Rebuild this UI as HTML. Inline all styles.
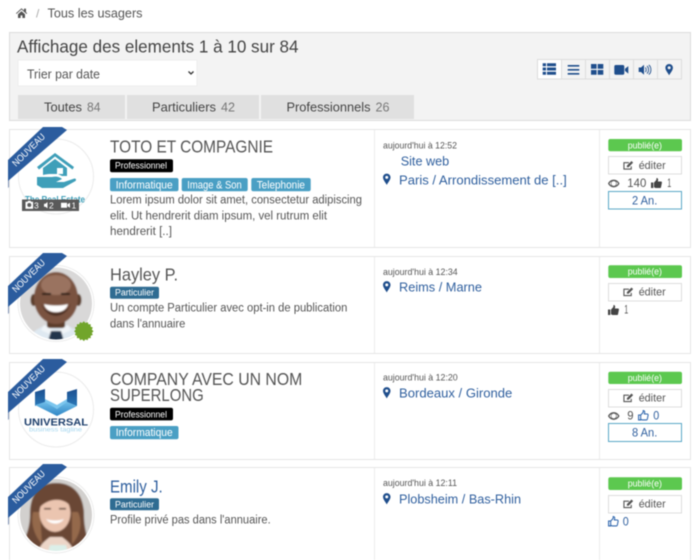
<!DOCTYPE html>
<html lang="fr">
<head>
<meta charset="utf-8">
<title>Tous les usagers</title>
<style>
html,body{margin:0;padding:0;background:#fff;width:700px;height:560px;overflow:hidden}
svg{display:block;filter:blur(.45px)}
text{font-family:"Liberation Sans",sans-serif;fill:#555;white-space:pre}
.l{fill:#2f5f9e}
.w{fill:#fff}
.d{font-size:9.5px;fill:#555}
.t{font-size:17.5px}
.p{font-size:11.5px}
.a{font-size:13px;fill:#2f5f9e}
.e{font-size:11px}
.s{font-size:9px;fill:#fff}
.n{font-size:12px}
.tag{font-size:11px;fill:#fff}
.lab{font-size:9px;fill:#fff}
.tab{font-size:13px;fill:#444}
.cnt{font-size:13px;fill:#777}
</style>
</head>
<body>
<svg width="700" height="560" viewBox="0 0 700 560" xmlns="http://www.w3.org/2000/svg">
<defs>
<symbol id="pin" viewBox="0 0 8 12" overflow="visible"><path fill="#1f4e8c" fill-rule="evenodd" d="M4 0C1.800 0 0 1.800 0 4c0 2.600 2.600 5.400 4 8 1.400-2.600 4-5.400 4-8 0-2.200-1.800-4-4-4zm0 2.400A1.600 1.600 0 1 1 4 5.600 1.600 1.600 0 0 1 4 2.400z"/></symbol>
<symbol id="edit" viewBox="0 0 12 11" overflow="visible"><path fill="none" stroke="#555" stroke-width="1.200" d="M9 6.500V9.400H1V2.400H6.500"/><path fill="#555" d="M4.200 5.600 9.300.6l1.800 1.800-5 5H4.200z"/></symbol>
<symbol id="eye" viewBox="0 0 12 8" overflow="visible"><path fill="#555" fill-rule="evenodd" d="M6 0C3.400 0 1.200 1.600 0 4c1.200 2.400 3.400 4 6 4s4.800-1.600 6-4C10.800 1.600 8.600 0 6 0zm0 1.500a2.500 2.500 0 1 1 0 5 2.500 2.500 0 0 1 0-5zM1.500 4c.6-.9 1.300-1.600 2.200-2.100A3.500 3.500 0 0 0 3.700 6.100C2.800 5.600 2.100 4.900 1.500 4zm9 0c-.6.9-1.300 1.600-2.200 2.100a3.500 3.500 0 0 0 0-4.200c.9.500 1.600 1.200 2.200 2.100z"/></symbol>
<symbol id="thumb" viewBox="0 0 11 10" overflow="visible"><path fill="#444" d="M0 4.500h2.300V10H0zM3 4.600 5.300 2 5.500 0c1.300 0 1.800 1 1.600 2.200L6.800 3.500H10c.7 0 1 .6.900 1.200L10 9.200c-.1.500-.5.800-1 .8H4.500L3 9.200z"/></symbol>
<symbol id="thumbo" viewBox="0 0 11 11" overflow="visible"><path fill="none" stroke="#2f66ad" stroke-width="1.100" d="M.6 5.200h2.200v5.200H.6zM2.800 5.400 5.300 2.600 5.500.6c1.200 0 1.700 1 1.500 2.100L6.700 4.200h2.900c.7 0 1.100.6 1 1.200L9.800 9.500c-.1.500-.5.900-1 .9H4.500L2.800 9.700z"/></symbol>
<symbol id="rib" viewBox="0 0 60 64" overflow="visible">
<path fill="#7f93b3" d="M0 50V61L1 60V50z"/>
<path fill="#2b5c9e" d="M0 33 35 0H54L59 3 0 54z"/>
<text x="0" y="0" transform="translate(8 40) rotate(-45)" style="font-size:9.500px;fill:#fff" textLength="42" lengthAdjust="spacingAndGlyphs">NOUVEAU</text>
</symbol>
<clipPath id="c2"><circle cx="56" cy="303.500" r="36"/></clipPath>
<clipPath id="c4"><circle cx="56" cy="515" r="36"/></clipPath>
<linearGradient id="bl1" x1="0" y1="0" x2="0" y2="1"><stop offset="0" stop-color="#1d4f8f"/><stop offset="1" stop-color="#2a78b8"/></linearGradient>
<linearGradient id="bl2" x1="0" y1="0" x2="0" y2="1"><stop offset="0" stop-color="#6fbde8"/><stop offset="1" stop-color="#2f86c5"/></linearGradient>
<filter id="soft" x="-10%" y="-10%" width="120%" height="120%"><feGaussianBlur stdDeviation=".9"/></filter>
</defs>

<!-- breadcrumb -->
<path fill="#555" d="M16 13.200 21.500 8.200 24 10.500V8.600h2v3.700l1.200 1-.7.700-5-4.500-5 4.500zM18 14.200l3.500-3.100 3.500 3.100V18h-2.600v-2.600h-1.800V18H18z"/>
<text x="36" y="17.500" style="font-size:12px;fill:#aaa">/</text>
<text x="47.500" y="17.500" style="font-size:12.500px;fill:#555" textLength="95" lengthAdjust="spacingAndGlyphs">Tous les usagers</text>

<!-- panel -->
<rect x="9.500" y="32.500" width="681" height="88" fill="#f3f3f3" stroke="#dcdcdc"/>
<text x="17" y="52.700" style="font-size:17.500px;fill:#444" textLength="281.500" lengthAdjust="spacingAndGlyphs">Affichage des elements 1 à 10 sur 84</text>
<rect x="18" y="60" width="179" height="26" fill="#fff" stroke="#eee"/>
<text x="27" y="78.700" style="font-size:12.500px;fill:#555" textLength="73" lengthAdjust="spacingAndGlyphs">Trier par date</text>
<path d="M188.500 71.500 191 74l2.500-2.500" fill="none" stroke="#333" stroke-width="1.300"/>
<rect x="18" y="95" width="107" height="24" fill="#e0e0e0"/>
<rect x="127" y="95" width="132" height="24" fill="#e0e0e0"/>
<rect x="261" y="95" width="153" height="24" fill="#e0e0e0"/>
<text class="tab" x="44" y="111.700" textLength="38" lengthAdjust="spacingAndGlyphs">Toutes</text>
<text class="cnt" x="87" y="111.700" textLength="13.500" lengthAdjust="spacingAndGlyphs">84</text>
<text class="tab" x="152" y="111.700" textLength="64" lengthAdjust="spacingAndGlyphs">Particuliers</text>
<text class="cnt" x="221" y="111.700" textLength="14" lengthAdjust="spacingAndGlyphs">42</text>
<text class="tab" x="286.500" y="111.700" textLength="84" lengthAdjust="spacingAndGlyphs">Professionnels</text>
<text class="cnt" x="375.500" y="111.700" textLength="14" lengthAdjust="spacingAndGlyphs">26</text>

<!-- view buttons -->
<rect x="537.500" y="59.500" width="144" height="19.500" fill="#f3f3f3" stroke="#ddd"/>
<rect x="537.500" y="59.500" width="24" height="19.500" fill="#fff" stroke="#ddd"/>
<path stroke="#ddd" d="M585.500 60v19M609.500 60v19M633.500 60v19M657.500 60v19"/>
<g fill="#1f4e8c">
<path d="M542.700 63.300h3.300v3h-3.300zM547 63.300h9v3h-9zM542.700 67.500h3.300v3h-3.300zM547 67.500h9v3h-9zM542.700 71.700h3.300v3h-3.300zM547 71.700h9v3h-9z"/>
<path d="M567.700 65h11.600v1.600h-11.600zM567.700 69h11.600v1.600h-11.600zM567.700 73h11.600v1.600h-11.600z"/>
<path d="M591 64h5.600v4.700H591zM597.700 64h5.600v4.700h-5.600zM591 70h5.600v4.700H591zM597.700 70h5.600v4.700h-5.600z"/>
<path d="M614.300 66.500c0-.9.600-1.500 1.500-1.500h7c.9 0 1.500.6 1.500 1.500v6.700c0 .9-.6 1.500-1.500 1.500h-7c-.9 0-1.500-.6-1.500-1.500zM625 68.800l3.300-2.700v7.500l-3.300-2.700z"/>
<path d="M638.700 67.500h2.300l3-2.700v9.900l-3-2.700h-2.300z"/>
<path d="M645.300 67.500c1.200.9 1.200 3.600 0 4.500M647 66c2 1.500 2 6 0 7.500M648.800 65c2.800 2 2.800 7.500 0 9.500" fill="none" stroke="#1f4e8c" stroke-width=".9"/>
</g>
<use href="#pin" x="665" y="64" width="8.300" height="11.300"/>

<!-- CARD 1 -->
<rect x="9.500" y="129.500" width="681" height="118" fill="#fff" stroke="#e6e6e6"/>
<path stroke="#ececec" d="M374.500 130v117M599.500 130v117"/>
<circle cx="56" cy="176.500" r="37.500" fill="#fff" stroke="#ebebeb"/>
<g fill="#3f9fb9">
<path d="M37 167 55 153 74 167 72.500 169.500 55 156.500 39 169.500z"/>
<path d="M43 168 55 159 67 168V176H62L58 174H50C47 174 45 174.500 43 175z"/>
<path d="M37 177H52C56 176 60 177 62 179L56 182H64L74.500 178.500C76 178.500 76.500 180 75.500 181L63 188H42L37 185z"/>
</g>
<path d="M57 168h6v6h-6z" fill="#fff"/>
<text x="25" y="202.500" style="font-size:9px;font-weight:bold;fill:#3f9fb9" textLength="60" lengthAdjust="spacingAndGlyphs">The Real Estate</text>
<rect x="22" y="199.500" width="57" height="11.500" fill="#5a5a5a"/>
<path fill="#fff" fill-rule="evenodd" d="M25.500 201.700h2l.6-1h2.400l.6 1h2v7h-7.600zm3.800 1.300a2 2 0 1 0 0 4 2 2 0 0 0 0-4z"/>
<text x="34" y="208.700" style="font-size:8.500px;fill:#fff">3</text>
<path fill="#fff" d="M44 203.700h1.500l2-1.700v6.400l-2-1.700H44z"/>
<text x="49" y="208.700" style="font-size:8.500px;fill:#fff">2</text>
<path fill="#fff" d="M61 202.700h6v5h-6zM67.500 204.200l2.500-1.500v5l-2.500-1.500z"/>
<text x="71.500" y="208.700" style="font-size:8.500px;fill:#fff">1</text>
<use href="#rib" x="8" y="127" width="60" height="64"/>

<text class="t" x="110" y="152.700" textLength="163" lengthAdjust="spacingAndGlyphs">TOTO ET COMPAGNIE</text>
<rect x="110" y="159.300" width="63" height="13" rx="2" fill="#000"/>
<text class="lab" x="115" y="168.700" textLength="52" lengthAdjust="spacingAndGlyphs">Professionnel</text>
<rect x="110" y="178" width="68.500" height="13.300" rx="2" fill="#4a9fc4"/>
<text class="tag" x="115.700" y="188.300" textLength="57" lengthAdjust="spacingAndGlyphs">Informatique</text>
<rect x="181.700" y="178" width="66" height="13.300" rx="2" fill="#4a9fc4"/>
<text class="tag" x="187.300" y="188.300" textLength="54.500" lengthAdjust="spacingAndGlyphs">Image &amp; Son</text>
<rect x="251.300" y="178" width="59.400" height="13.300" rx="2" fill="#4a9fc4"/>
<text class="tag" x="256.700" y="188.300" textLength="48.300" lengthAdjust="spacingAndGlyphs">Telephonie</text>
<text class="p" x="110" y="203.500" textLength="252" lengthAdjust="spacingAndGlyphs">Lorem ipsum dolor sit amet, consectetur adipiscing</text>
<text class="p" x="110" y="219.300" textLength="217" lengthAdjust="spacingAndGlyphs">elit. Ut hendrerit diam ipsum, vel rutrum elit</text>
<text class="p" x="110" y="235" textLength="62" lengthAdjust="spacingAndGlyphs">hendrerit [..]</text>

<text class="d" x="383" y="148.300" textLength="74" lengthAdjust="spacingAndGlyphs">aujourd'hui à 12:52</text>
<text class="a" x="400.700" y="165.700" textLength="48.500" lengthAdjust="spacingAndGlyphs">Site web</text>
<use href="#pin" x="383" y="173.500" width="7.500" height="11.500"/>
<text class="a" x="399" y="184.300" textLength="167.700" lengthAdjust="spacingAndGlyphs">Paris / Arrondissement de [..]</text>

<rect x="608.300" y="139" width="73.700" height="12.300" rx="2" fill="#5cc84f"/>
<text class="s" x="627.700" y="148.300" textLength="34.300" lengthAdjust="spacingAndGlyphs">publié(e)</text>
<rect x="608.500" y="156.500" width="73" height="17.500" fill="#fff" stroke="#ddd"/>
<use href="#edit" x="623" y="160.500" width="11" height="10"/>
<text class="e" x="638.700" y="169" textLength="27" lengthAdjust="spacingAndGlyphs">éditer</text>
<use href="#eye" x="608" y="179.500" width="11.500" height="8"/>
<text class="n" x="627.300" y="187" textLength="19" lengthAdjust="spacingAndGlyphs">140</text>
<use href="#thumb" x="651" y="178" width="11" height="10"/>
<text class="n" x="667.300" y="187" textLength="4" lengthAdjust="spacingAndGlyphs">1</text>
<rect x="608.500" y="191.500" width="73" height="17.500" fill="#fff" stroke="#5aa7c7"/>
<text x="632" y="204.300" style="font-size:11.500px;fill:#2f5f9e" textLength="25.300" lengthAdjust="spacingAndGlyphs">2 An.</text>

<!-- CARD 2 -->
<rect x="9.500" y="256.500" width="681" height="97" fill="#fff" stroke="#e6e6e6"/>
<path stroke="#ececec" d="M374.500 257v96M599.500 257v96"/>
<circle cx="56" cy="303.500" r="38" fill="#fff" stroke="#ebebeb"/>
<g clip-path="url(#c2)"><g filter="url(#soft)">
<rect x="18" y="265" width="76" height="78" fill="#d9d8d8"/>
<path d="M26 345C28 332 40 328 48 324H64C72 328 84 332 86 345z" fill="#dfe9f1"/>
<rect x="47" y="316" width="18" height="12" fill="#5c3c2b"/>
<path d="M44 325 56 332 68 325 71 330 58 336H54L41 330z" fill="#f1f5f8"/>
<path d="M51 331H61L65 345H47z" fill="#22344c"/>
<ellipse cx="33.500" cy="300" rx="3" ry="6" fill="#5c3c2b"/>
<ellipse cx="78.500" cy="300" rx="3" ry="6" fill="#5c3c2b"/>
<ellipse cx="56" cy="298" rx="22" ry="26" fill="#7a5240"/>
<ellipse cx="56" cy="285" rx="15" ry="10" fill="#9a7360"/>
<path d="M42 293h9v2h-9zM61 293h9v2h-9z" fill="#2c1b14"/>
<path d="M44 304C50 306 62 306 68 304 66 315 46 315 44 304z" fill="#fff"/>
<path d="M41 303C46 320 66 320 71 303 66 316 46 316 41 303z" fill="#4a2d20"/>
</g></g>
<path fill="#71a52b" d="M84 321l1.800 1.900 2.400-1 .9 2.400 2.600 0-.1 2.600 2.400 1-1.100 2.300 1.900 1.800-1.900 1.800 1.100 2.300-2.400 1 .1 2.600-2.600 0-.9 2.400-2.400-1-1.800 1.900-1.800-1.900-2.400 1-.9-2.400-2.600 0 .1-2.600-2.400-1 1.100-2.300-1.900-1.800 1.900-1.800-1.100-2.300 2.400-1-.1-2.600 2.600 0 .9-2.400 2.400 1z" transform="translate(8.200 32.400) scale(.9)"/>
<use href="#rib" x="8" y="253" width="60" height="64"/>

<text class="t" x="110" y="280.700" textLength="68" lengthAdjust="spacingAndGlyphs">Hayley P.</text>
<rect x="110" y="286.700" width="49" height="12" rx="2" fill="#2f6c92"/>
<text class="lab" x="115" y="295.500" textLength="39" lengthAdjust="spacingAndGlyphs">Particulier</text>
<text class="p" x="110" y="311.300" textLength="237.300" lengthAdjust="spacingAndGlyphs">Un compte Particulier avec opt-in de publication</text>
<text class="p" x="110" y="327.300" textLength="75.300" lengthAdjust="spacingAndGlyphs">dans l'annuaire</text>

<text class="d" x="383" y="275" textLength="74.700" lengthAdjust="spacingAndGlyphs">aujourd'hui à 12:34</text>
<use href="#pin" x="383" y="281" width="7.500" height="11.500"/>
<text class="a" x="399" y="291.700" textLength="83" lengthAdjust="spacingAndGlyphs">Reims / Marne</text>
<rect x="608.300" y="265.300" width="73.700" height="12.700" rx="2" fill="#5cc84f"/>
<text class="s" x="627.700" y="274.700" textLength="34.300" lengthAdjust="spacingAndGlyphs">publié(e)</text>
<rect x="608.500" y="283.500" width="73" height="17.500" fill="#fff" stroke="#ddd"/>
<use href="#edit" x="623" y="287" width="11" height="10"/>
<text class="e" x="638.700" y="295.700" textLength="27" lengthAdjust="spacingAndGlyphs">éditer</text>
<use href="#thumb" x="608" y="305" width="11" height="10"/>
<text class="n" x="624.300" y="313.300" textLength="4" lengthAdjust="spacingAndGlyphs">1</text>

<!-- CARD 3 -->
<rect x="9.500" y="362.500" width="681" height="97" fill="#fff" stroke="#e6e6e6"/>
<path stroke="#ececec" d="M374.500 363v96M599.500 363v96"/>
<circle cx="56" cy="409.500" r="37.500" fill="#fff" stroke="#ebebeb"/>
<path d="M35 392 45 389V402L35 406z" fill="url(#bl1)"/>
<path d="M67 392 77 389V406L67 402z" fill="url(#bl1)"/>
<path d="M45 399 57 405 67 399V403L57 409 45 403z" fill="#7cc6ee"/>
<path d="M35 405 45 402 57 409 67 402 77 406 57 416z" fill="url(#bl2)"/>
<text x="24" y="425.500" style="font-size:10.500px;font-weight:bold;fill:#1d3f6c" textLength="64" lengthAdjust="spacingAndGlyphs">UNIVERSAL</text>
<text x="29" y="431.500" style="font-size:6px;fill:#a5d6ee" textLength="53" lengthAdjust="spacingAndGlyphs">business tagline</text>
<use href="#rib" x="8" y="359" width="60" height="64"/>

<text class="t" x="110" y="385" textLength="192.300" lengthAdjust="spacingAndGlyphs">COMPANY AVEC UN NOM</text>
<text class="t" x="110" y="401" textLength="93.700" lengthAdjust="spacingAndGlyphs">SUPERLONG</text>
<rect x="110" y="407.700" width="63" height="12.700" rx="2" fill="#000"/>
<text class="lab" x="115" y="417.300" textLength="52" lengthAdjust="spacingAndGlyphs">Professionnel</text>
<rect x="110" y="426" width="68.500" height="13.300" rx="2" fill="#4a9fc4"/>
<text class="tag" x="115.700" y="436.200" textLength="57" lengthAdjust="spacingAndGlyphs">Informatique</text>

<text class="d" x="383" y="380.700" textLength="74.700" lengthAdjust="spacingAndGlyphs">aujourd'hui à 12:20</text>
<use href="#pin" x="383" y="387" width="7.500" height="11.500"/>
<text class="a" x="399" y="397.700" textLength="113.300" lengthAdjust="spacingAndGlyphs">Bordeaux / Gironde</text>
<rect x="608.300" y="371.700" width="73.700" height="12.300" rx="2" fill="#5cc84f"/>
<text class="s" x="627.700" y="381" textLength="34.300" lengthAdjust="spacingAndGlyphs">publié(e)</text>
<rect x="608.500" y="389.500" width="73" height="17.500" fill="#fff" stroke="#ddd"/>
<use href="#edit" x="623" y="393" width="11" height="10"/>
<text class="e" x="638.700" y="401.700" textLength="27" lengthAdjust="spacingAndGlyphs">éditer</text>
<use href="#eye" x="608" y="412" width="11.500" height="8"/>
<text class="n" x="627.300" y="419.300" textLength="6.300" lengthAdjust="spacingAndGlyphs">9</text>
<use href="#thumbo" x="638" y="410" width="10.500" height="10.500"/>
<text class="n l" x="653.300" y="419.300" textLength="6" lengthAdjust="spacingAndGlyphs">0</text>
<rect x="608.500" y="423.500" width="73" height="18" fill="#fff" stroke="#5aa7c7"/>
<text x="632" y="436.700" style="font-size:11.500px;fill:#2f5f9e" textLength="25.300" lengthAdjust="spacingAndGlyphs">8 An.</text>

<!-- CARD 4 -->
<path d="M9.500 561V467.500H690.500V561" fill="#fff" stroke="#e6e6e6"/>
<path stroke="#ececec" d="M374.500 468v92M599.500 468v92"/>
<circle cx="56" cy="515" r="38" fill="#fff" stroke="#ebebeb"/>
<g clip-path="url(#c4)"><g filter="url(#soft)">
<rect x="18" y="477" width="76" height="76" fill="#d2d0ce"/>
<path d="M56 483C36 483 30 498 30 515 30 530 24 540 20 552H92C88 540 84 530 84 515 84 498 76 483 56 483z" fill="#6b4734"/>
<path d="M38 552C40 544 46 540 50 537H62C66 540 72 544 74 552z" fill="#edd6c8"/>
<path d="M50 545H66L68 552H48z" fill="#dcefe9"/>
<path d="M33 512C30 525 36 538 42 544L40 512z" fill="#94694c"/>
<path d="M78 512C84 525 78 538 72 544L72 512z" fill="#94694c"/>
<ellipse cx="55" cy="513" rx="15.500" ry="19" fill="#ebc5b0"/>
<path d="M39 508C42 496 50 491 58 491 66 492 71 498 72 508 66 498 50 496 39 508z" fill="#6b4734"/>
<path d="M46 519C50 525 60 525 64 519 59 521 51 521 46 519z" fill="#fff"/>
<path d="M44 508h7v1.500h-7zM59 508h7v1.500h-7z" fill="#4a2f22"/>
</g></g>
<use href="#rib" x="8" y="464" width="60" height="64"/>

<text class="t l" x="110" y="492.300" textLength="52.700" lengthAdjust="spacingAndGlyphs">Emily J.</text>
<rect x="110" y="498.300" width="49" height="12" rx="2" fill="#2f6c92"/>
<text class="lab" x="115" y="507.300" textLength="39" lengthAdjust="spacingAndGlyphs">Particulier</text>
<text class="p" x="110" y="523.300" textLength="160.700" lengthAdjust="spacingAndGlyphs">Profile privé pas dans l'annuaire.</text>

<text class="d" x="383" y="486" textLength="74" lengthAdjust="spacingAndGlyphs">aujourd'hui à 12:11</text>
<use href="#pin" x="383" y="493" width="7.500" height="11.500"/>
<text class="a" x="399" y="503.300" textLength="122" lengthAdjust="spacingAndGlyphs">Plobsheim / Bas-Rhin</text>
<rect x="608.300" y="477.300" width="73.700" height="12.700" rx="2" fill="#5cc84f"/>
<text class="s" x="627.700" y="486.700" textLength="34.300" lengthAdjust="spacingAndGlyphs">publié(e)</text>
<rect x="608.500" y="495.500" width="73" height="17.500" fill="#fff" stroke="#ddd"/>
<use href="#edit" x="623" y="499" width="11" height="10"/>
<text class="e" x="638.700" y="507.700" textLength="27" lengthAdjust="spacingAndGlyphs">éditer</text>
<use href="#thumbo" x="608" y="516" width="10.500" height="10.500"/>
<text class="n l" x="622.700" y="525.300" textLength="6" lengthAdjust="spacingAndGlyphs">0</text>
</svg>
</body>
</html>
